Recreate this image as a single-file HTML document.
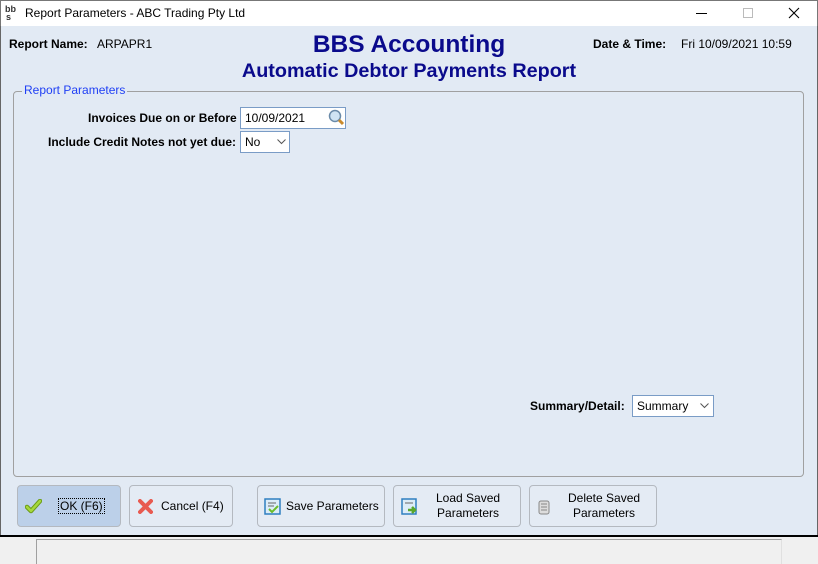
<!DOCTYPE html>
<html><head><style>
*{margin:0;padding:0;box-sizing:border-box}
body{width:818px;height:564px;overflow:hidden;background:#e2eaf4;font-family:"Liberation Sans",Arial,sans-serif;font-size:12px;color:#000;position:relative}
.abs{position:absolute}
.b{font-weight:bold}
.btn{position:absolute;top:485px;height:42px;border:1px solid #b4b9c0;border-radius:4px;background:#e4ebf4;font-size:12px;display:flex;align-items:center}
.inp{position:absolute;background:#fff;border:1px solid #7a9cc6;height:22px;font-size:12px;padding:3px 0 0 4px}
</style></head><body>
<div class="abs" style="left:0;top:0;width:818px;height:26px;background:#fff;border:1px solid #777;border-bottom:none"></div>
<svg class="abs" style="left:5px;top:4px" width="16" height="16"><text x="0" y="8" font-family="Liberation Sans" font-size="9" font-weight="bold" fill="#333">bb</text><text x="1" y="16" font-family="Liberation Sans" font-size="9" font-weight="bold" fill="#333">s</text></svg>
<div class="abs" style="left:25px;top:6px;font-size:12px">Report Parameters - ABC Trading Pty Ltd</div>
<div class="abs" style="left:696px;top:13px;width:11px;height:1px;background:#000"></div>
<div class="abs" style="left:743px;top:8px;width:10px;height:10px;border:1px solid #bbb"></div>
<svg class="abs" style="left:788px;top:7px" width="12" height="12"><path d="M1 1L11 11M11 1L1 11" stroke="#000" stroke-width="1.1"/></svg>
<div class="abs" style="left:0;top:26px;width:1px;height:510px;background:#666"></div>
<div class="abs" style="left:817px;top:26px;width:1px;height:510px;background:#666"></div>
<div class="abs b" style="left:9px;top:37px">Report Name:</div>
<div class="abs" style="left:97px;top:37px">ARPAPR1</div>
<div class="abs b" style="left:593px;top:37px">Date &amp; Time:</div>
<div class="abs" style="left:681px;top:37px">Fri 10/09/2021 10:59</div>
<div class="abs b" style="left:0;width:818px;text-align:center;top:31px;font-size:24.5px;color:#0a0a8c">BBS Accounting</div>
<div class="abs b" style="left:0;width:818px;text-align:center;top:60px;font-size:19.8px;color:#0a0a8c">Automatic Debtor Payments Report</div>
<div class="abs" style="left:13px;top:91px;width:791px;height:386px;border:1px solid #a0a0a0;border-radius:4px"></div>
<div class="abs" style="left:22px;top:83px;padding:0 2px;background:#e2eaf4;color:#1f3ff5;font-size:12px">Report Parameters</div>
<div class="abs b" style="left:88px;top:111px">Invoices Due on or Before</div>
<div class="abs b" style="left:48px;top:135px">Include Credit Notes not yet due:</div>
<div class="inp" style="left:240px;top:107px;width:106px">10/09/2021</div>
<svg class="abs" style="left:328px;top:109px" width="17" height="17"><circle cx="7" cy="7" r="5.5" fill="#cfe3f3" stroke="#6a8aa8" stroke-width="1.5"/><path d="M11 11l4 4" stroke="#c98a2c" stroke-width="3"/></svg>
<div class="inp" style="left:240px;top:131px;width:50px">No</div>
<svg class="abs" style="left:277px;top:139px" width="9" height="6"><path d="M0.5 0.5L4.5 4.5L8.5 0.5" stroke="#555" fill="none"/></svg>
<div class="abs b" style="left:530px;top:399px">Summary/Detail:</div>
<div class="inp" style="left:632px;top:395px;width:82px">Summary</div>
<svg class="abs" style="left:700px;top:403px" width="9" height="6"><path d="M0.5 0.5L4.5 4.5L8.5 0.5" stroke="#555" fill="none"/></svg>
<div class="btn" style="left:17px;width:104px;background:#bcd0e9"><svg style="margin-left:7px" width="17" height="15"><path d="M2 8l4 4 9-10" stroke="#6a9a18" stroke-width="4.5" fill="none" stroke-linecap="round" stroke-linejoin="round"/><path d="M2 8l4 4 9-10" stroke="#a6d83c" stroke-width="2.5" fill="none" stroke-linecap="round" stroke-linejoin="round"/></svg><span style="margin-left:17px;outline:1px dotted #000;padding:0 1px">OK (F6)</span></div>
<div class="btn" style="left:129px;width:104px"><svg style="margin-left:8px" width="15" height="15"><path d="M2 2L13 13M13 2L2 13" stroke="#e85a50" stroke-width="4" stroke-linecap="round"/></svg><span style="margin-left:8px">Cancel (F4)</span></div>
<div class="btn" style="left:257px;width:128px"><svg style="margin-left:6px" width="17" height="17"><rect x="1" y="1" width="15" height="15" fill="#dcecf8" stroke="#2f7fc0" stroke-width="1.5"/><path d="M4 5h8M4 8h6" stroke="#666"/><path d="M5 11l3 3 6-6" stroke="#6bbd2a" stroke-width="2" fill="none"/></svg><span style="margin-left:5px">Save Parameters</span></div>
<div class="btn" style="left:393px;width:128px"><svg style="margin-left:7px" width="17" height="17"><rect x="1" y="1" width="14" height="15" fill="#dcecf8" stroke="#2f7fc0" stroke-width="1.5"/><path d="M4 5h8" stroke="#666"/><path d="M7 12h6M11 9l3 3-3 3" stroke="#5aa82a" stroke-width="2.5" fill="none"/></svg><span style="margin-left:18px;text-align:center;line-height:15px">Load Saved<br>Parameters</span></div>
<div class="btn" style="left:529px;width:128px"><svg style="margin-left:8px" width="12" height="17"><rect x="1" y="3" width="10" height="13" rx="2" fill="#ddd" stroke="#888"/><path d="M3 6h6M3 9h6M3 12h6" stroke="#888"/></svg><span style="margin-left:18px;text-align:center;line-height:15px">Delete Saved<br>Parameters</span></div>
<div class="abs" style="left:0;top:535px;width:818px;height:29px;background:#f0f0f0;border-top:2px solid #000"></div>
<div class="abs" style="left:36px;top:539px;width:746px;height:25px;border:1px solid #a0a0a0;border-right:1px solid #e0e0e0;border-bottom:none"></div>
</body></html>
